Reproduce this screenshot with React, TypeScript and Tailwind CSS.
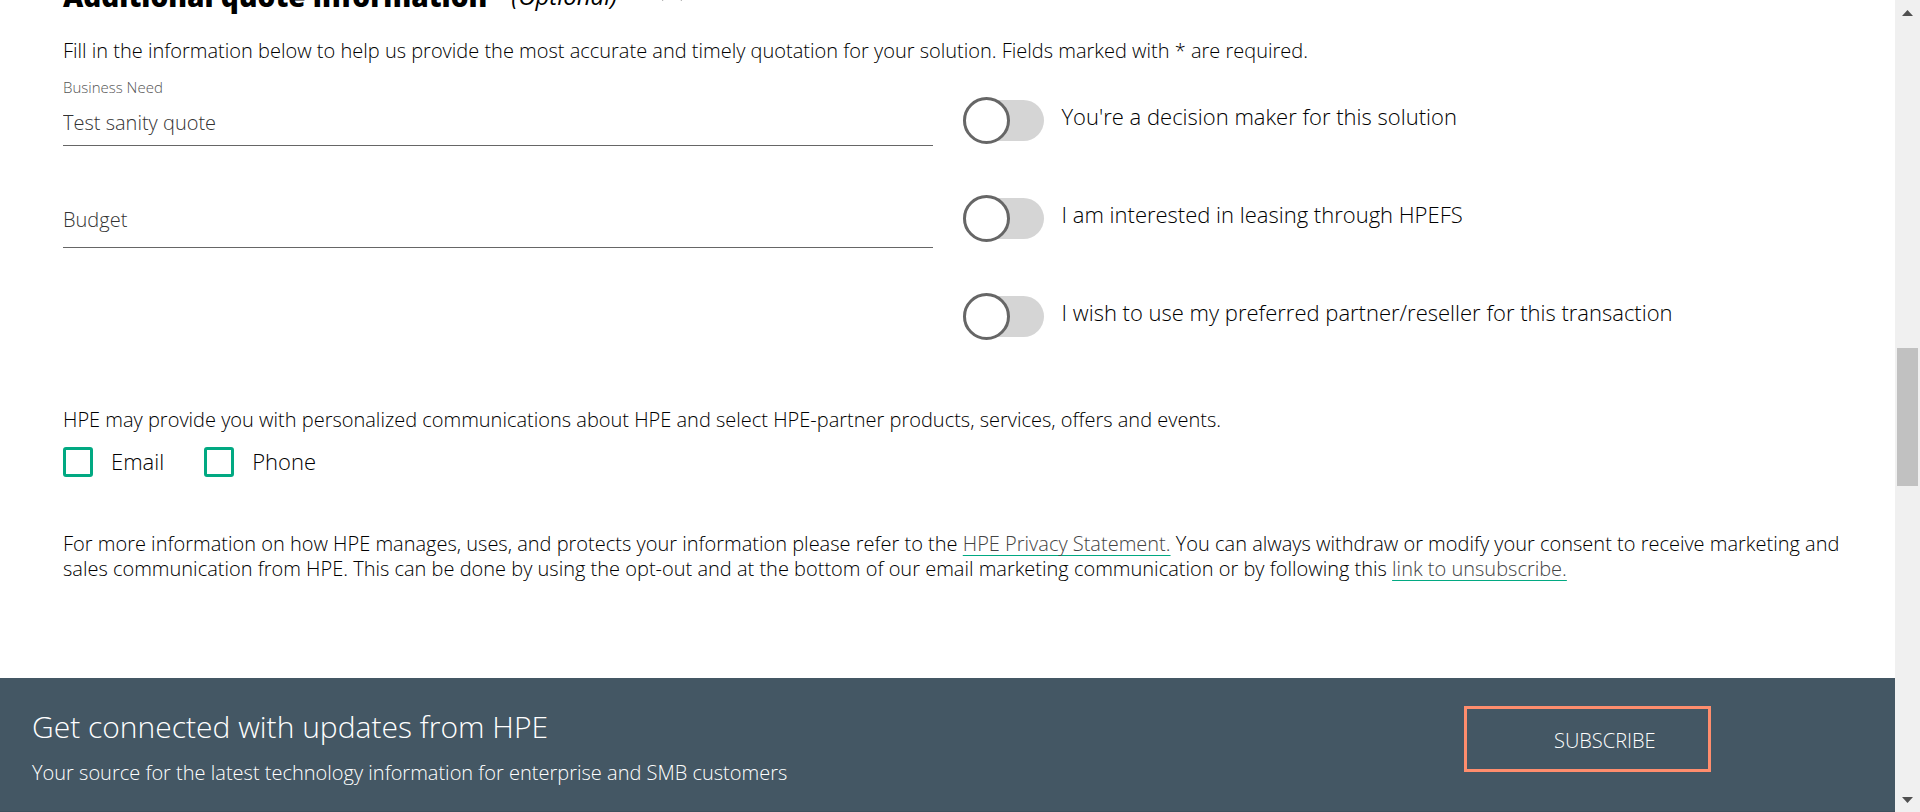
import { useState } from "react";

const preferences = [
  "You're a decision maker for this solution",
  "I am interested in leasing through HPEFS",
  "I wish to use my preferred partner/reseller for this transaction",
];

const channels = ["Email", "Phone"];

function Toggle({ label }: { label: string }) {
  return (
    <label className="flex cursor-pointer gap-[18px]">
      <input type="checkbox" role="switch" className="peer sr-only" />
      <span className="my-[3px] flex h-[41px] w-[81px] shrink-0 items-center rounded-full bg-[#d5d5d5] peer-checked:justify-end">
        <span className="size-[47px] shrink-0 rounded-full border-3 border-[#666666] bg-white" />
      </span>
      <span className="text-[22px] leading-[38px]">{label}</span>
    </label>
  );
}

function ScrollRail() {
  return (
    <div aria-hidden="true" className="sticky top-0 flex h-screen w-[25px] shrink-0 flex-col bg-[#f0f0f0]">
      <div className="flex h-[25px] shrink-0 items-center justify-center">
        <svg width="11" height="6" viewBox="0 0 11 6" fill="#505050"><path d="M0 6 5.5 0 11 6z" /></svg>
      </div>
      <div className="grow-[323]" />
      <div className="mx-0.5 grow-[138] bg-[#c1c1c1]" />
      <div className="grow-[301]" />
      <div className="flex h-[25px] shrink-0 items-center justify-center">
        <svg width="11" height="6" viewBox="0 0 11 6" fill="#505050"><path d="M0 0h11L5.5 6z" /></svg>
      </div>
    </div>
  );
}

export default function App() {
  const [need, setNeed] = useState("Test sanity quote");
  const [budget, setBudget] = useState("");

  return (
    <div className="flex bg-white font-['Open_Sans',sans-serif] text-[20px] leading-[25px] font-light text-black">
      <div className="flex min-h-screen min-w-0 flex-1 flex-col overflow-hidden">
        <main className="px-[63px]">
          <div className="-mt-6 flex h-10 items-center">
            <h2 className="text-[28px] leading-10 font-extrabold">Additional quote information</h2>
            <span className="ml-6 text-[24px] leading-10 font-normal italic">(Optional)</span>
            <button type="button" aria-label="Collapse section" className="ml-11 text-[#666666]">
              <svg width="22" height="12" viewBox="0 0 22 12" fill="none" stroke="currentColor" strokeWidth="2"><path d="M1 10 11 1l10 9" /></svg>
            </button>
          </div>

          <p className="mt-[22px]">
            Fill in the information below to help us provide the most accurate and timely quotation for your solution. Fields marked with * are required.
          </p>

          <div className="mt-3.5 grid grid-cols-2 gap-[30px]">
            <div className="flex flex-col">
              <label htmlFor="need" className="text-[15px] leading-5 text-[#555555]">Business Need</label>
              <input
                id="need"
                value={need}
                onChange={(e) => setNeed(e.target.value)}
                className="h-[49px] border-b border-[#666666] pt-0.5 text-[#333333] outline-none"
              />
              <input
                aria-label="Budget"
                placeholder="Budget"
                value={budget}
                onChange={(e) => setBudget(e.target.value)}
                className="mt-[53px] h-[49px] border-b border-[#666666] pb-2 text-[#333333] outline-none placeholder:text-[#333333]"
              />
            </div>
            <div className="flex flex-col gap-[51px] pt-5">
              {preferences.map((label) => (
                <Toggle key={label} label={label} />
              ))}
            </div>
          </div>

          <p className="mt-[67px]">
            HPE may provide you with personalized communications about HPE and select HPE-partner products, services, offers and events.
          </p>
          <div className="mt-[15px] flex gap-10">
            {channels.map((name) => (
              <label key={name} className="flex items-start gap-[18px] text-[22px] leading-7">
                <input type="checkbox" className="size-[30px] appearance-none rounded-[3px] border-3 border-[#01a982] checked:bg-[#01a982]" />
                {name}
              </label>
            ))}
          </div>

          <p className="mt-[54px] -mr-8">
            For more information on how HPE manages, uses, and protects your information please refer to the{" "}
            <a href="#privacy" className="text-[#444444] underline decoration-[#01a982] decoration-1 underline-offset-4 [text-decoration-skip-ink:none]">HPE Privacy Statement.</a>{" "}
            You can always withdraw or modify your consent to receive marketing and sales communication from HPE. This can be done by using the opt-out and at the bottom of our email marketing communication or by following this{" "}
            <a href="#unsubscribe" className="text-[#444444] underline decoration-[#01a982] decoration-1 underline-offset-4 [text-decoration-skip-ink:none]">link to unsubscribe.</a>
          </p>
        </main>

        <footer className="mt-[97px] flex flex-1 items-start justify-between border-b border-[#3d505d] bg-[#445764] pt-7 pr-[184px] pl-8 text-white">
          <div>
            <h2 className="text-[30px] leading-[42px]">Get connected with updates from HPE</h2>
            <p className="mt-3">Your source for the latest technology information for enterprise and SMB customers</p>
          </div>
          <button type="button" className="h-[66px] w-[247px] border-3 border-[#ff8d6d] pt-0.5 pl-[87px] text-left">SUBSCRIBE</button>
        </footer>
      </div>
      <ScrollRail />
    </div>
  );
}
